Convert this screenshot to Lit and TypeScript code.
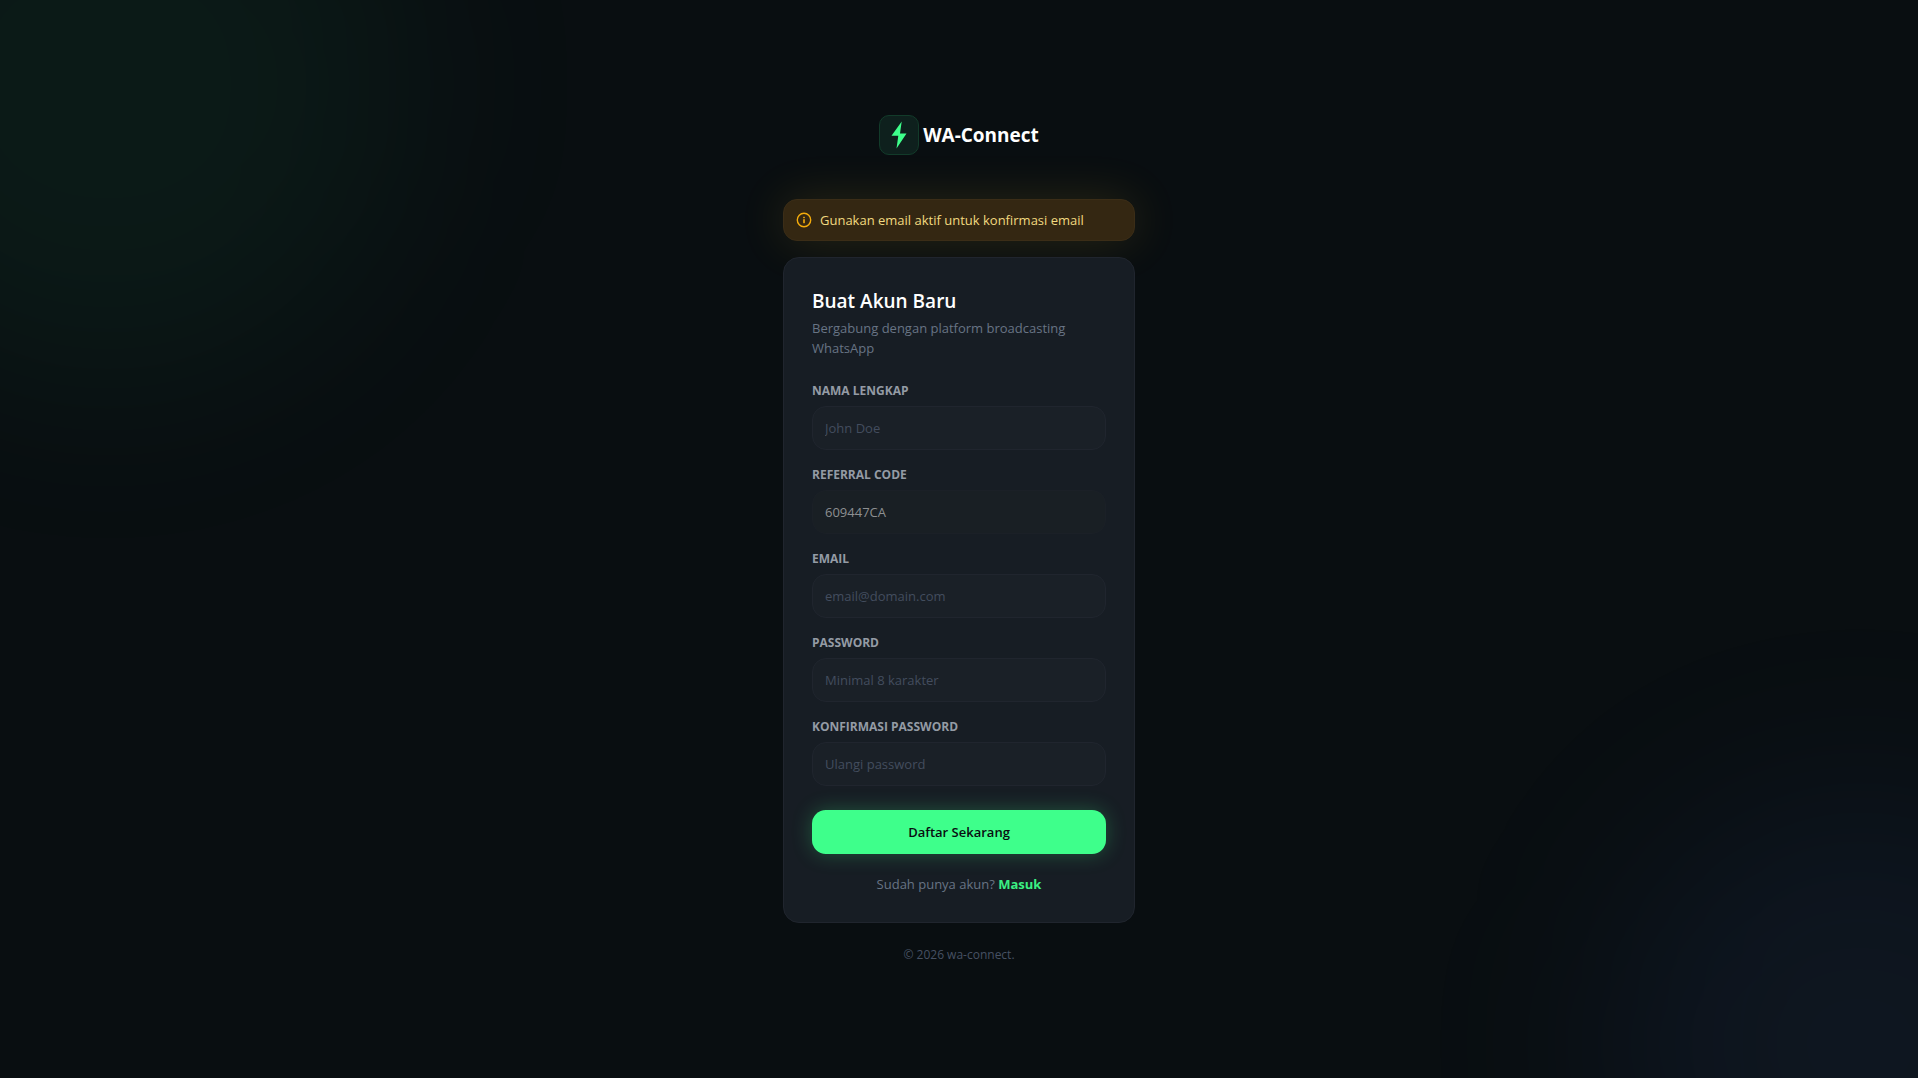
import { LitElement, html, css } from "lit";
import { customElement } from "lit/decorators.js";

interface Field {
  id: string;
  label: string;
  type: string;
  placeholder: string;
  value?: string;
  readonly?: boolean;
}

const FIELDS: Field[] = [
  { id: "name", label: "Nama Lengkap", type: "text", placeholder: "John Doe" },
  { id: "referral", label: "Referral Code", type: "text", placeholder: "", value: "609447CA", readonly: true },
  { id: "email", label: "Email", type: "email", placeholder: "email@domain.com" },
  { id: "password", label: "Password", type: "password", placeholder: "Minimal 8 karakter" },
  { id: "confirm", label: "Konfirmasi Password", type: "password", placeholder: "Ulangi password" },
];

@customElement("app-root")
export class AppRoot extends LitElement {
  static styles = css`
    :host {
      display: block;
      font-family: "Segoe UI", "Open Sans", "Noto Sans", sans-serif;
      font-size: 13px;
      line-height: 20px;
      color: #fff;
    }
    * {
      box-sizing: border-box;
    }
    .page {
      position: relative;
      isolation: isolate;
      overflow: hidden;
      min-height: 100vh;
      display: flex;
      align-items: center;
      justify-content: center;
      padding: 24px;
      background: #090e11;
    }
    .glow {
      position: absolute;
      z-index: -1;
      border-radius: 50%;
      filter: blur(100px);
    }
    .glow-green {
      width: 600px;
      height: 600px;
      top: -20%;
      left: -10%;
      background: rgba(62, 255, 139, 0.05);
    }
    .glow-blue {
      width: 500px;
      height: 500px;
      bottom: -20%;
      right: -10%;
      background: rgba(80, 125, 240, 0.07);
    }
    .column {
      width: 100%;
      max-width: 352px;
    }
    .brand {
      display: flex;
      align-items: center;
      justify-content: center;
      gap: 4px;
      margin-bottom: 44px;
    }
    .mark {
      display: flex;
      align-items: center;
      justify-content: center;
      width: 40px;
      height: 40px;
      border: 1px solid #123b2a;
      border-radius: 10px;
      background: #0e201d;
    }
    .brand-name {
      font-size: 19px;
      line-height: 30px;
      font-weight: 700;
    }
    .notice {
      display: flex;
      align-items: center;
      gap: 8px;
      height: 42px;
      margin-bottom: 16px;
      padding: 0 12px;
      border: 1px solid #3b2d17;
      border-radius: 14px;
      background: #342712;
      box-shadow: 0 0 48px rgba(251, 191, 36, 0.14);
      color: #f2da80;
      font-weight: 500;
    }
    .card {
      position: relative;
      padding: 28px;
      border: 1px solid #20252e;
      border-radius: 16px;
      background: #171d24;
    }
    .title {
      margin: 0 0 2px;
      font-size: 19px;
      line-height: 30px;
      font-weight: 600;
    }
    .subtitle {
      margin: 0 0 24px;
      color: #687484;
    }
    .fields {
      display: grid;
      gap: 16px;
      margin-bottom: 24px;
    }
    .field {
      display: grid;
      gap: 6px;
    }
    .label {
      font-size: 12px;
      line-height: 18px;
      font-weight: 700;
      text-transform: uppercase;
      color: #949ba5;
    }
    .input {
      width: 100%;
      height: 44px;
      padding: 0 12px;
      border: 1px solid #20252e;
      border-radius: 14px;
      outline: none;
      background: #1a2027;
      color: #fff;
      font: inherit;
    }
    .input::placeholder {
      color: #434d5e;
      opacity: 1;
    }
    .input:read-only {
      border-color: #1b2027;
      background: #191f24;
      color: #8d8f91;
      font-weight: 500;
    }
    .submit {
      display: block;
      width: 100%;
      height: 44px;
      margin-bottom: 20px;
      border: 0;
      border-radius: 14px;
      background: #3eff8b;
      box-shadow: 0 0 20px rgba(62, 255, 139, 0.25);
      color: #090e11;
      font: inherit;
      font-weight: 600;
      cursor: pointer;
    }
    .login {
      margin: 0;
      text-align: center;
      color: #687484;
    }
    .login-link {
      color: #3bef83;
      font-weight: 700;
      text-decoration: none;
    }
    .copyright {
      margin: 24px 0 0;
      font-size: 12px;
      line-height: 16px;
      text-align: center;
      color: #475163;
    }
  `;

  private renderField(f: Field) {
    return html`
      <div class="field">
        <label class="label" for=${f.id}>${f.label}</label>
        <input
          class="input"
          id=${f.id}
          name=${f.id}
          type=${f.type}
          placeholder=${f.placeholder}
          .value=${f.value ?? ""}
          ?readonly=${f.readonly ?? false}
        />
      </div>
    `;
  }

  render() {
    return html`
      <main class="page">
        <div class="glow glow-green"></div>
        <div class="glow glow-blue"></div>
        <div class="column">
          <div class="brand">
            <span class="mark">
              <svg width="16" height="28" viewBox="0 0 16 28" aria-hidden="true">
                <path d="M10.7 0.5 L0.5 14.8 H7.3 L5.5 27.5 L15.5 12.5 H9 Z" fill="#3eff8b" />
              </svg>
            </span>
            <span class="brand-name">WA-Connect</span>
          </div>

          <div class="notice" role="status">
            <svg width="16" height="16" viewBox="0 0 16 16" fill="none" aria-hidden="true">
              <circle cx="8" cy="8" r="6.7" stroke="#f5ac0b" stroke-width="1.4" />
              <rect x="7.2" y="4.8" width="1.6" height="1.4" fill="#f5ac0b" />
              <rect x="7.2" y="7.2" width="1.6" height="4" fill="#f5ac0b" />
            </svg>
            <span>Gunakan email aktif untuk konfirmasi email</span>
          </div>

          <section class="card">
            <h1 class="title">Buat Akun Baru</h1>
            <p class="subtitle">Bergabung dengan platform broadcasting WhatsApp</p>
            <form @submit=${(e: Event) => e.preventDefault()}>
              <div class="fields">${FIELDS.map((f) => this.renderField(f))}</div>
              <button class="submit" type="submit">Daftar Sekarang</button>
            </form>
            <p class="login">Sudah punya akun? <a class="login-link" href="#masuk">Masuk</a></p>
          </section>

          <p class="copyright">© 2026 wa-connect.</p>
        </div>
      </main>
    `;
  }
}
